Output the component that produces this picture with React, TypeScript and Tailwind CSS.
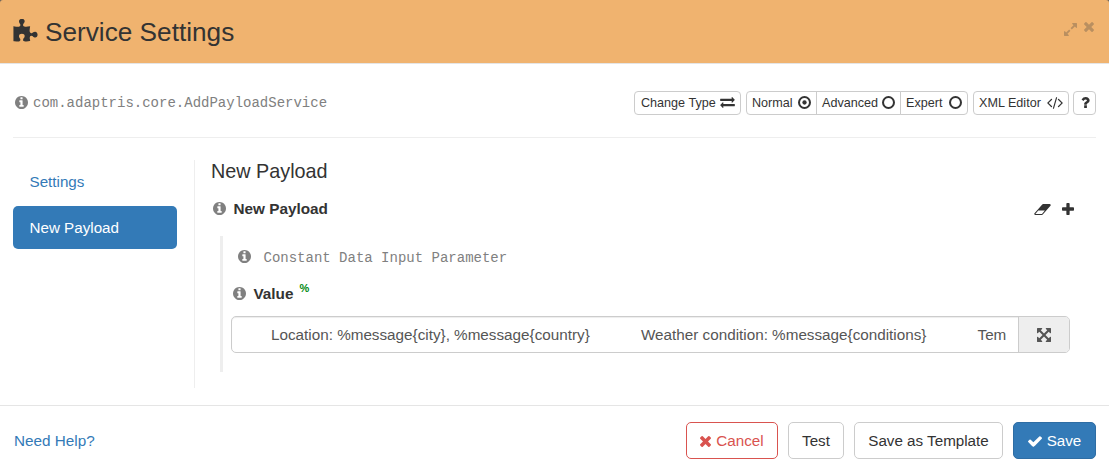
import React from "react";

type IconProps = { className?: string };

const glyph = (viewBox: string, d: string) =>
  function Glyph({ className = "" }: IconProps) {
    return (
      <svg viewBox={viewBox} className={`shrink-0 fill-current ${className}`} aria-hidden="true">
        <path d={d} />
      </svg>
    );
  };

const Puzzle = glyph(
  "91 0 1664 1792",
  "M1755 1083q0 81-44.5 135t-123.5 54q-41 0-77.5-17.5t-59-38-56.5-38-71-17.5q-110 0-110 124 0 39 16 115t15 115v5q-22 0-33 1-34 3-97.5 11.5t-115.5 13.5-98 5q-61 0-103-26.5t-42-83.5q0-37 17.5-71t38-56.5 38-59 17.5-77.5q0-79-54-123.5t-135-44.5q-84 0-143 45.5t-59 127.5q0 43 15 83t33.5 64.5 33.5 53 15 50.5q0 45-46 89-37 35-117 35-95 0-245-24-9-2-27.5-4t-27.5-4l-13-2q-1 0-3-1-2 0-2-1v-1024q2 1 17.5 3.5t34 5 21.5 3.5q150 24 245 24 80 0 117-35 46-44 46-89 0-22-15-50.5t-33.5-53-33.5-64.5-15-83q0-82 59-127.5t144-45.5q80 0 134 44.5t54 123.5q0 41-17.5 77.5t-38 59-38 56.5-17.5 71q0 57 42 83.5t103 26.5q64 0 180-15t163-17v2q-1 2-3.5 17.5t-5 34-3.5 21.5q-24 150-24 245 0 80 35 117 44 46 89 46 22 0 50.5-15t53-33.5 64.5-33.5 83-15q82 0 127.5 59t45.5 143z"
);
const Info = glyph(
  "128 128 1536 1536",
  "M1152 1376v-160q0-14-9-23t-23-9h-96v-512q0-14-9-23t-23-9h-320q-14 0-23 9t-9 23v160q0 14 9 23t23 9h96v320h-96q-14 0-23 9t-9 23v160q0 14 9 23t23 9h448q14 0 23-9t9-23zm-128-896v-160q0-14-9-23t-23-9h-192q-14 0-23 9t-9 23v160q0 14 9 23t23 9h192q14 0 23-9t9-23zm640 416q0 209-103 385.5t-279.5 279.5-385.5 103-385.5-103-279.5-279.5-103-385.5 103-385.5 279.5-279.5 385.5-103 385.5 103 279.5 279.5 103 385.5z"
);
const Exchange = glyph(
  "0 288 1792 1344",
  "M1792 1184v192q0 13-9.5 22.5t-22.5 9.5h-1376v192q0 13-9.5 22.5t-22.5 9.5q-12 0-24-10l-319-320q-9-9-9-22 0-14 9-23l320-320q9-9 23-9 13 0 22.5 9.5t9.5 22.5v192h1376q13 0 22.5 9.5t9.5 22.5zm0-544q0 14-9 23l-320 320q-9 9-23 9-13 0-22.5-9.5t-9.5-22.5v-192h-1376q-13 0-22.5-9.5t-9.5-22.5v-192q0-13 9.5-22.5t22.5-9.5h1376v-192q0-14 9-23t23-9q12 0 24 10l319 319q9 9 9 23z"
);
const Code = glyph(
  "109 256 1830 1408",
  "M681 1399l-50 50q-10 10-23 10t-23-10l-466-466q-10-10-10-23t10-23l466-466q10-10 23-10t23 10l50 50q10 10 10 23t-10 23l-393 393 393 393q10 10 10 23t-10 23zm591-1067l-373 1291q-4 13-15.5 19.5t-23.5 2.5l-62-17q-13-4-19.5-15.5t-2.5-24.5l373-1291q4-13 15.5-19.5t23.5-2.5l62 17q13 4 19.5 15.5t2.5 24.5zm657 651l-466 466q-10 10-23 10t-23-10l-50-50q-10-10-10-23t10-23l393-393-393-393q-10-10-10-23t10-23l50-50q10-10 23-10t23 10l466 466q10 10 10 23t-10 23z"
);
const Question = glyph(
  "445 256 960 1280",
  "M1088 1256v240q0 16-12 28t-28 12h-240q-16 0-28-12t-12-28v-240q0-16 12-28t28-12h240q16 0 28 12t12 28zm316-600q0 54-15.5 101t-35 76.5-55 59.5-57.5 43.5-61 35.5q-41 23-68.5 65t-27.5 67q0 17-12 32.5t-28 15.5h-240q-15 0-25.5-18.5t-10.5-37.5v-45q0-83 65-156.5t143-108.5q59-27 84-56t25-76q0-42-46.5-74t-107.5-32q-65 0-108 29-35 25-107 115-13 16-31 16-12 0-25-8l-164-125q-13-10-15.5-25t5.5-28q160-266 464-266 80 0 161 31t146 83 106 127.5 41 158.5z"
);
const Eraser = glyph(
  "-64 256 1920 1280",
  "M832 1408l336-384h-768l-336 384h768zm1013-1077q15 34 9.5 71.5t-30.5 65.5l-896 1024q-38 44-96 44h-768q-38 0-69.5-20.5t-47.5-54.5q-15-34-9.5-71.5t30.5-65.5l896-1024q38-44 96-44h768q38 0 69.5 20.5t47.5 54.5z"
);
const Plus = glyph(
  "192 128 1408 1408",
  "M1600 736v192q0 40-28 68t-68 28h-416v416q0 40-28 68t-68 28h-192q-40 0-68-28t-28-68v-416h-416q-40 0-68-28t-28-68v-192q0-40 28-68t68-28h416v-416q0-40 28-68t68-28h192q40 0 68 28t28 68v416h416q40 0 68 28t28 68z"
);
const Times = glyph(
  "302 366 1188 1188",
  "M1490 1322q0 40-28 68l-136 136q-28 28-68 28t-68-28l-294-294-294 294q-28 28-68 28t-68-28l-136-136q-28-28-28-68t28-68l294-294-294-294q-28-28-28-68t28-68l136-136q28-28 68-28t68 28l294 294 294-294q28-28 68-28t68 28l136 136q28 28 28 68t-28 68l-294 294 294 294q28 28 28 68z"
);
const Check = glyph(
  "121 334 1550 1188",
  "M1671 566q0 40-28 68l-724 724-136 136q-28 28-68 28t-68-28l-136-136-362-362q-28-28-28-68t28-68l136-136q28-28 68-28t68 28l294 295 656-657q28-28 68-28t68 28l136 136q28 28 28 68z"
);
const Expand = glyph(
  "128 128 1536 1536",
  "M883 1056q0 13-10 23l-332 332 144 144q19 19 19 45t-19 45-45 19h-448q-26 0-45-19t-19-45v-448q0-26 19-45t45-19 45 19l144 144 332-332q10-10 23-10t23 10l114 114q10 10 10 23zm781-864v448q0 26-19 45t-45 19-45-19l-144-144-332 332q-10 10-23 10t-23-10l-114-114q-10-10-10-23t10-23l332-332-144-144q-19-19-19-45t19-45 45-19h448q26 0 45 19t19 45z"
);
const ArrowsAlt = glyph(
  "128 128 1536 1536",
  "M1411 541l-355 355 355 355 144-144q29-31 70-14 39 17 39 59v448q0 26-19 45t-45 19h-448q-42 0-59-40-17-39 14-69l144-144-355-355-355 355 144 144q31 30 14 69-17 40-59 40h-448q-26 0-45-19t-19-45v-448q0-42 40-59 39-17 69 14l144 144 355-355-355-355-144 144q-19 19-45 19-12 0-24-5-40-17-40-59v-448q0-26 19-45t45-19h448q42 0 59 40 17 39-14 69l-144 144 355 355 355-355-144-144q-31-30-14-69 17-40 59-40h448q26 0 45 19t19 45v448q0 42-39 59-13 5-25 5-26 0-45-19z"
);

function Radio({ checked = false }: { checked?: boolean }) {
  return (
    <svg viewBox="0 0 1536 1536" className="size-[13px] shrink-0" aria-hidden="true">
      <circle cx="768" cy="768" r="648" fill="none" stroke="currentColor" strokeWidth="240" />
      {checked && <circle cx="768" cy="768" r="256" fill="currentColor" />}
    </svg>
  );
}

const smallButton =
  "flex h-6 items-center justify-between border border-[#ccc] bg-white pr-[5px] pl-[6px] pb-px text-[12.6px] leading-none whitespace-nowrap";
const largeButton =
  "flex h-[37px] items-center justify-center rounded-[5px] border pt-px text-[15.2px] whitespace-nowrap";

function Header() {
  return (
    <header className="flex h-16 items-start justify-between rounded-t-[3px] border-b border-[#e5e5e5] bg-[#f0b36f] pr-[15px] pl-[13px]">
      <h1 className="flex items-start text-[26.2px] leading-[30px]">
        <Puzzle className="mt-[19px] h-[26px] w-[25px]" />
        <span className="mt-[17px] ml-[7px]">Service Settings</span>
      </h1>
      <div className="flex text-[#b98f60]">
        <Expand className="mt-[23px] size-[13px]" />
        <Times className="mt-[22px] ml-[7px] size-[10px]" />
      </div>
    </header>
  );
}

function Toolbar() {
  return (
    <div className="mx-[13px] flex h-[74px] items-start justify-between border-b border-[#eee] pt-[27px]">
      <div className="flex h-6 items-center pl-[2px] text-[#808080]">
        <Info className="mb-[2px] size-[13px]" />
        <span className="ml-[5px] font-['Liberation_Mono',monospace] text-[14px]">
          com.adaptris.core.AddPayloadService
        </span>
      </div>
      <div className="flex">
        <button className={`${smallButton} w-[107px] rounded-[4px]`}>
          <span className="pt-[2px]">Change Type</span> <Exchange className="h-[11px] w-[15px]" />
        </button>
        <div className="ml-[5px] flex">
          <button className={`${smallButton} w-[71px] rounded-l-[4px]`}>
            <span className="-ml-px pt-[2px]">Normal</span> <Radio checked />
          </button>
          <button className={`${smallButton} -ml-px w-[85px]`}>
            <span className="-ml-px pt-[2px]">Advanced</span> <Radio />
          </button>
          <button className={`${smallButton} -ml-px w-[68px] rounded-r-[4px]`}>
            <span className="-ml-px pt-[2px]">Expert</span> <Radio />
          </button>
        </div>
        <button className={`${smallButton} ml-[5px] w-[96px] rounded-[4px]`}>
          <span className="-ml-px pt-[2px]">XML Editor</span> <Code className="h-3 w-4" />
        </button>
        <button className={`${smallButton} ml-1 w-[23px] rounded-[4px]`}>
          <Question className="mx-auto h-[11px] w-[9px]" />
        </button>
      </div>
    </div>
  );
}

function SideNav() {
  return (
    <nav className="flex h-[228px] w-[182px] flex-col border-r border-[#eee] pr-[17px] text-[15.2px]">
      <a className="flex h-[43px] items-center pt-[2px] pl-[16.5px] text-[#337ab7]">Settings</a>
      <a className="mt-[3px] flex h-[43px] items-center rounded-[5px] bg-[#337ab7] pt-[2px] pl-[16.5px] text-white">
        New Payload
      </a>
    </nav>
  );
}

function PayloadPanel() {
  return (
    <section className="flex w-[859px] flex-col">
      <h2 className="text-[19.8px] leading-[22px]">New Payload</h2>
      <div className="mt-[17px] flex h-5 items-center justify-between pl-[2px]">
        <div className="flex items-center">
          <Info className="mb-px size-[13px] text-[#808080]" />
          <span className="ml-[7.5px] text-[15.3px] font-bold">New Payload</span>
        </div>
        <div className="mr-[-4px] flex items-center gap-[11px]">
          <Eraser className="h-[11px] w-[17px]" />
          <Plus className="size-3" />
        </div>
      </div>
      <div className="mt-[17px] ml-[9px] flex h-[136px] flex-col border-l-[3px] border-[#eee] pl-2">
        <div className="mt-[11px] ml-[7px] flex h-5 items-center text-[#808080]">
          <Info className="mb-px size-[13px]" />
          <span className="mt-[3px] ml-[12.5px] font-['Liberation_Mono',monospace] text-[14px]">
            Constant Data Input Parameter
          </span>
        </div>
        <div className="mt-[17px] ml-[2px] flex h-5 items-center">
          <Info className="mb-px size-[13px] text-[#808080]" />
          <span className="ml-[7.5px] text-[15.3px] font-bold">Value</span>
          <span className="mb-3 ml-[6px] font-['Liberation_Sans',sans-serif] text-[11px] leading-none font-bold text-[#008a12]">
            %
          </span>
        </div>
        <div className="mt-3 flex h-[37px] w-[839px] rounded-[5px] border border-[#ccc] text-[15.25px] text-[#555] shadow-[inset_0_1px_1px_rgba(0,0,0,0.075)]">
          <div className="mr-3 ml-3 flex w-[762px] items-center overflow-hidden pt-px pl-[27px] whitespace-pre">
            <span className="w-[370px] shrink-0">Location: %message&#123;city&#125;, %message&#123;country&#125;</span>
            <span className="w-[336.5px] shrink-0">Weather condition: %message&#123;conditions&#125;</span>
            <span>Tem</span>
          </div>
          <button className="flex flex-1 items-center justify-center rounded-r-[4px] border-l border-[#ccc] bg-[#eee]">
            <ArrowsAlt className="size-[14px]" />
          </button>
        </div>
      </div>
    </section>
  );
}

function Footer() {
  return (
    <footer className="mt-[17px] flex h-[70px] items-start justify-between border-t border-[#e5e5e5] pt-4 pr-[13px] pl-[14px]">
      <a className="flex h-[37px] items-center pt-[2px] text-[15.3px] text-[#337ab7]">Need Help?</a>
      <div className="flex gap-[10px]">
        <button className={`${largeButton} w-[92px] border-[#d9534f] text-[#d9534f]`}>
          <Times className="mr-[5px] size-[11px]" />
          Cancel
        </button>
        <button className={`${largeButton} w-[56px] border-[#ccc]`}>Test</button>
        <button className={`${largeButton} w-[149px] border-[#ccc]`}>Save as Template</button>
        <button className={`${largeButton} w-[83px] border-[#2e6da4] bg-[#337ab7] text-white`}>
          <Check className="mr-[5px] h-[11px] w-[14px]" />
          Save
        </button>
      </div>
    </footer>
  );
}

export default function App() {
  return (
    <div className="h-[475px] w-[1109px] overflow-hidden bg-[#6b6259] font-['Liberation_Sans',Arial,sans-serif] text-[#333]">
      <Header />
      <main className="flex h-[411px] flex-col bg-white">
        <Toolbar />
        <div className="mt-[22px] ml-[13px] flex h-[228px] gap-4">
          <SideNav />
          <PayloadPanel />
        </div>
        <Footer />
      </main>
    </div>
  );
}
